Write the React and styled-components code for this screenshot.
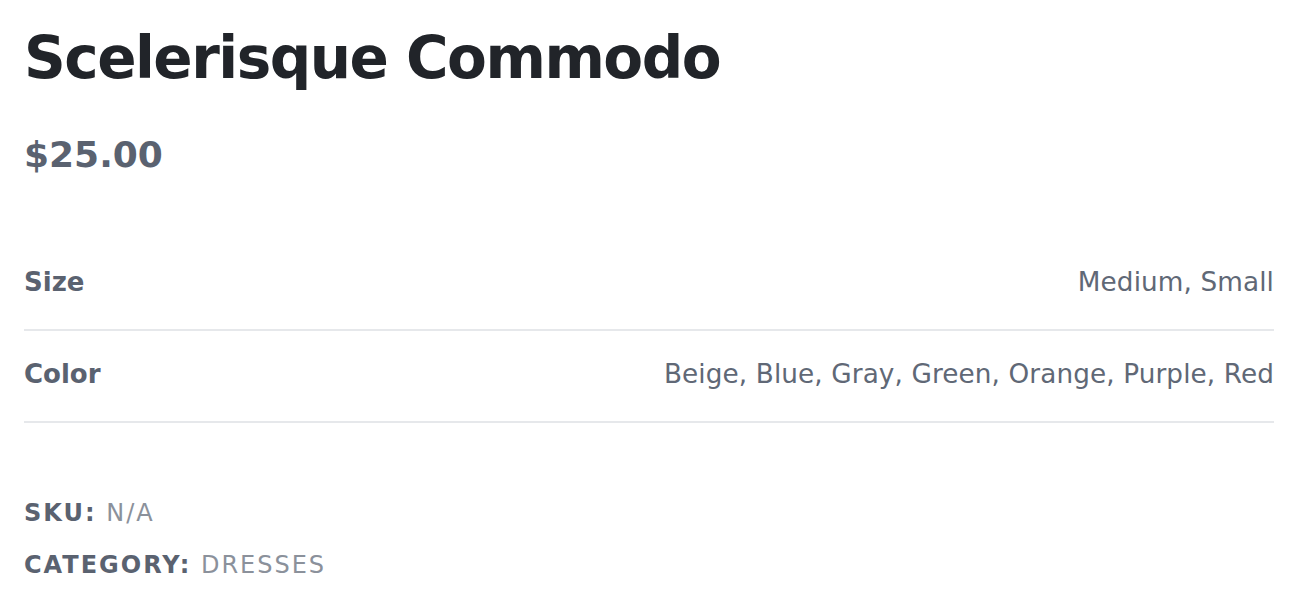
import styled, { createGlobalStyle } from "styled-components";

const GlobalStyle = createGlobalStyle`
    body {
        margin: 0;
        background: #ffffff;
        font-family: "DejaVu Sans", "Open Sans", sans-serif;
    }
`

const attributes = [
    { label: "Size", value: "Medium, Small" },
    { label: "Color", value: "Beige, Blue, Gray, Green, Orange, Purple, Red" },
];

const meta = [
    { label: "SKU", value: "N/A" },
    { label: "Category", value: "Dresses" },
];

const App = () => {
    return (
        <Page>
            <GlobalStyle />
            <Title>Scelerisque Commodo</Title>
            <Price>$25.00</Price>
            <AttributeTable>
                {attributes.map(a => (
                    <AttributeRow key={a.label}>
                        <AttributeLabel>{a.label}</AttributeLabel>
                        <AttributeValue>{a.value}</AttributeValue>
                    </AttributeRow>
                ))}
            </AttributeTable>
            <Meta>
                {meta.map(m => (
                    <MetaLine key={m.label}>
                        <MetaLabel>{m.label}:</MetaLabel> <MetaValue>{m.value}</MetaValue>
                    </MetaLine>
                ))}
            </Meta>
        </Page>
    )
}

const Page = styled.div`
    padding: 18px 40px 0 24px;
    display: flex;
    flex-direction: column;
`

const Title = styled.h1`
    margin: 0;
    font-size: 58px;
    line-height: 80px;
    font-weight: 700;
    color: #212429;
    letter-spacing: -1.5px;
`

const Price = styled.div`
    margin-top: 34px;
    font-size: 36px;
    line-height: 46px;
    font-weight: 700;
    color: #5a6270;
`

const AttributeTable = styled.div`
    margin-top: 61px;
    display: flex;
    flex-direction: column;
`

const AttributeRow = styled.div`
    display: flex;
    justify-content: space-between;
    align-items: center;
    height: 92px;
    padding-bottom: 4px;
    border-bottom: 2px solid #e6e8eb;
    box-sizing: border-box;
    font-size: 26px;
    color: #5a6270;
`

const AttributeLabel = styled.span`
    font-weight: 700;
`

const AttributeValue = styled.span`
    font-weight: 400;
    font-size: 26.3px;
    letter-spacing: 0.1px;
    color: #606876;
`

const Meta = styled.div`
    margin-top: 76px;
    display: flex;
    flex-direction: column;
    gap: 23px;
`

const MetaLine = styled.div`
    font-size: 24px;
    line-height: 29px;
    letter-spacing: 2px;
    text-transform: uppercase;
`

const MetaLabel = styled.span`
    font-weight: 700;
    color: #5a6270;
`

const MetaValue = styled.span`
    font-weight: 400;
    color: #8b919b;
`

export default App;
